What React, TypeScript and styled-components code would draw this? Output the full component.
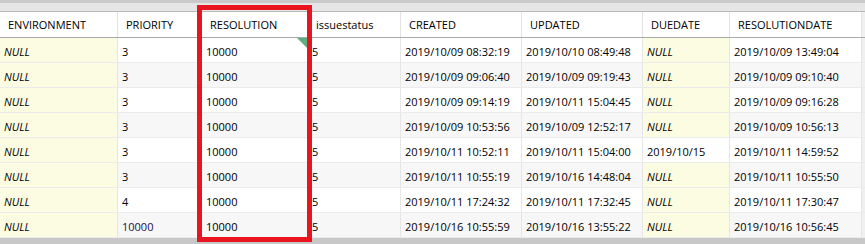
import React from "react";
import styled, { createGlobalStyle } from "styled-components";

const Global = createGlobalStyle`
  html, body { margin: 0; padding: 0; background: #c8c8c8; overflow: hidden; }
  body { width: 865px; height: 244px; font-family: "Open Sans", "Noto Sans", sans-serif; }
`;

const COLS = "118px 84px 106px 93px 121px 121px 87px 132px";

const Frame = styled.div`
  position: relative;
  width: 865px;
  height: 244px;
  display: flex;
  flex-direction: column;
  background: #c8c8c8;
  overflow: hidden;
`;

const TopBar = styled.div`
  height: 8px;
  border-top: 3px solid #c9c9c9;
  background: #e6e6e6;
  flex: none;
`;

const Grid = styled.div`
  display: flex;
  flex-direction: column;
  background: #f0f0f0;
  flex: none;
`;

const HeaderRow = styled.div`
  display: grid;
  grid-template-columns: ${COLS} 1fr;
  height: 25px;
  border-top: 1px solid #b9b9b9;
  border-bottom: 1px solid #a9a9a9;
  background: #ffffff;
`;

const HeaderCell = styled.div`
  box-sizing: border-box;
  border-right: 1px solid #e3e3e3;
  padding: 0 0 0 8px;
  font-size: 11px;
  line-height: 26px;
  color: #000;
  white-space: nowrap;
  overflow: hidden;
`;

const Filler = styled.div<{ $bg: string }>`
  background: ${(p) => p.$bg};
`;

const Row = styled.div<{ $alt: boolean }>`
  display: grid;
  grid-template-columns: ${COLS} 1fr;
  height: 24px;
  border-bottom: 1px solid #ebebeb;
  background: ${(p) => (p.$alt ? "#f7f7f7" : "#ffffff")};
`;

const Cell = styled.div<{ $null?: boolean; $edited?: boolean }>`
  position: relative;
  box-sizing: border-box;
  border-right: 1px solid #e6e6e6;
  padding: 0 0 0 4px;
  font-size: 11px;
  line-height: 27px;
  white-space: nowrap;
  overflow: hidden;
  color: ${(p) => (p.$edited ? "#2a0c4e" : "#000")};
  font-style: ${(p) => (p.$null ? "italic" : "normal")};
  background: ${(p) => (p.$null ? "#fcfce2" : "transparent")};
`;

const Marker = styled.span`
  position: absolute;
  top: 0;
  right: 0;
  width: 0;
  height: 0;
  border-top: 10px solid #5fae82;
  border-left: 10px solid transparent;
`;

const Highlight = styled.div`
  position: absolute;
  left: 197px;
  top: 5px;
  width: 105px;
  height: 227px;
  border: 5px solid #e8141f;
  pointer-events: none;
`;

const headers = [
  "ENVIRONMENT",
  "PRIORITY",
  "RESOLUTION",
  "issuestatus",
  "CREATED",
  "UPDATED",
  "DUEDATE",
  "RESOLUTIONDATE",
];

const N = "NULL";
const rows: string[][] = [
  [N, "3", "10000", "5", "2019/10/09 08:32:19", "2019/10/10 08:49:48", N, "2019/10/09 13:49:04"],
  [N, "3", "10000", "5", "2019/10/09 09:06:40", "2019/10/09 09:19:43", N, "2019/10/09 09:10:40"],
  [N, "3", "10000", "5", "2019/10/09 09:14:19", "2019/10/11 15:04:45", N, "2019/10/09 09:16:28"],
  [N, "3", "10000", "5", "2019/10/09 10:53:56", "2019/10/09 12:52:17", N, "2019/10/09 10:56:13"],
  [N, "3", "10000", "5", "2019/10/11 10:52:11", "2019/10/11 15:04:00", "2019/10/15", "2019/10/11 14:59:52"],
  [N, "3", "10000", "5", "2019/10/11 10:55:19", "2019/10/16 14:48:04", N, "2019/10/11 10:55:50"],
  [N, "4", "10000", "5", "2019/10/11 17:24:32", "2019/10/11 17:32:45", N, "2019/10/11 17:30:47"],
  [N, "10000", "10000", "5", "2019/10/16 10:55:59", "2019/10/16 13:55:22", N, "2019/10/16 10:56:45"],
];

export default function App() {
  return (
    <>
      <Global />
      <Frame>
        <TopBar />
        <Grid>
          <HeaderRow>
            {headers.map((h) => (
              <HeaderCell key={h}>{h}</HeaderCell>
            ))}
            <Filler $bg="#f0f0f0" />
          </HeaderRow>
          {rows.map((r, i) => (
            <Row key={i} $alt={i % 2 === 1}>
              {r.map((v, j) => (
                <Cell key={j} $null={v === N} $edited={i === 7 && j === 1}>
                  {v}
                  {i === 0 && j === 2 && <Marker />}
                </Cell>
              ))}
              <Filler $bg="#f0f0f0" />
            </Row>
          ))}
        </Grid>
        <Highlight />
      </Frame>
    </>
  );
}
